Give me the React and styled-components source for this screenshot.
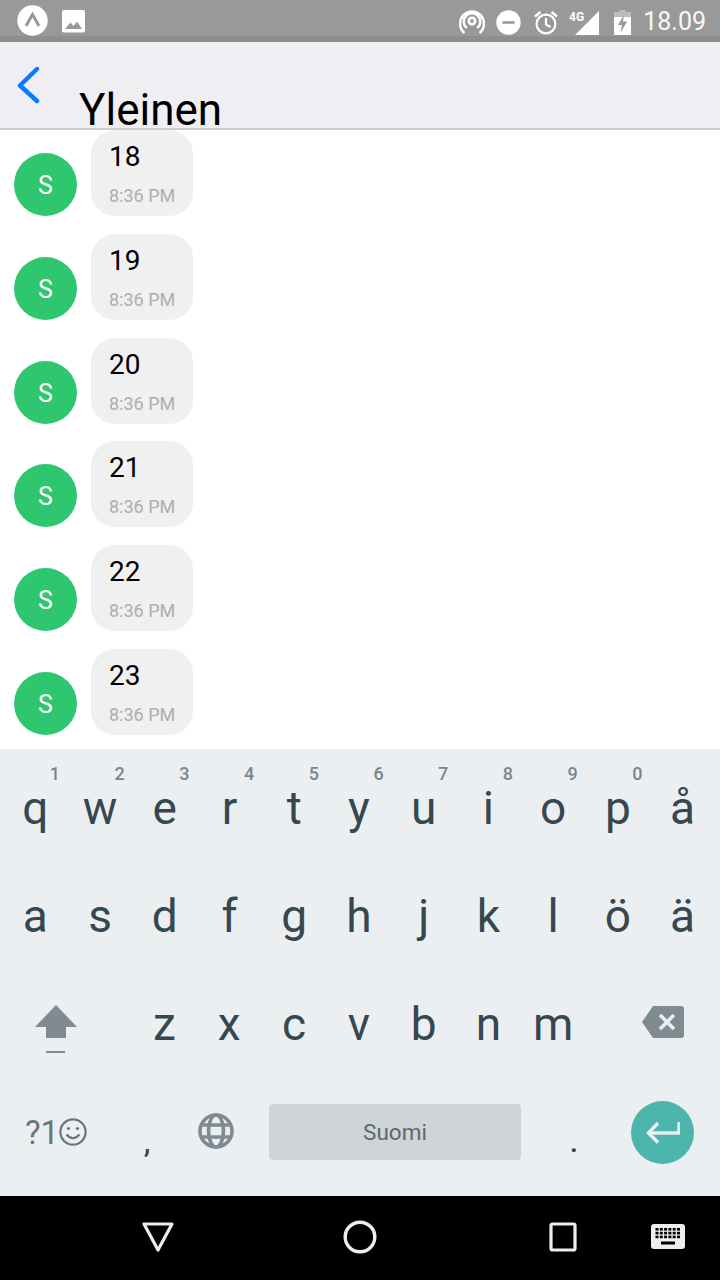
import React from "react";
import styled, { createGlobalStyle } from "styled-components";

const Global = createGlobalStyle`
  html, body { margin: 0; padding: 0; background: #fff; }
  body { font-family: Roboto, "Liberation Sans", sans-serif; }
`;
const Page = styled.div`
  width: 720px; height: 1280px; display: flex; flex-direction: column; overflow: hidden;
`;
const StatusBar = styled.div`
  height: 36px; flex: none; background: #999; border-bottom: 6px solid #8e8e8e;
  display: flex; align-items: flex-start; justify-content: space-between;
`;
const StatusLeft = styled.div`
  display: flex; align-items: center; gap: 14px; padding: 5px 0 0 17px;
`;
const StatusRight = styled.div`
  display: flex; align-items: center; gap: 11px; padding: 8px 14px 0 0;
`;
const StatusIcon = styled.span`
  display: flex; margin-left: ${p => p.$ml || 0}px;
`;
const Clock = styled.span`
  font-size: 25px; line-height: 28px; color: #f7f7f7; margin-left: 1px;
`;
const Header = styled.header`
  height: 88px; flex: none; box-sizing: border-box; background: #efeff3; border-bottom: 2px solid #cdcdd0;
  display: flex; align-items: flex-start;
`;
const BackButton = styled.div`
  width: 79px; padding: 24px 0 0 16px; box-sizing: border-box;
`;
const Title = styled.h1`
  margin: 51px 0 0; font-size: 44px; font-weight: 400; line-height: 34px; color: #000; white-space: nowrap;
`;
const List = styled.main`
  height: 619px; flex: none; overflow: hidden; background: #fff;
`;
const Row = styled.div`
  height: 103.8px; display: flex; align-items: flex-start; padding-left: 14px;
`;
const Avatar = styled.div`
  width: 63px; height: 63px; margin: 23px 14px 0 0; border-radius: 50%; background: #2ec76f; color: #fff;
  display: flex; align-items: center; justify-content: center; font-size: 25px; flex: none;
  box-sizing: border-box; padding-top: 2px;
`;
const Bubble = styled.div`
  width: 102px; height: 86px; box-sizing: border-box; background: #f0f0f0; border-radius: 24px;
  padding: 9px 0 0 18px;
`;
const MessageText = styled.div`
  font-size: 28px; line-height: 36px; color: #000;
`;
const MessageTime = styled.div`
  font-size: 18px; line-height: 24px; color: #aeaeae; margin-top: 9px;
`;
const Keyboard = styled.section`
  height: 447px; flex: none; background: #eceff1; box-sizing: border-box; padding-top: 5px;
`;
const KeyRow = styled.div`
  height: 108px; display: grid; align-items: center; box-sizing: border-box;
  padding: ${p => p.$pad || 0};
  grid-template-columns: ${p => p.$cols};
`;
const Key = styled.div`
  position: relative; height: 100%; display: flex; align-items: center; justify-content: center;
  font-size: 46px; color: #37474f; line-height: 1;
`;
const Hint = styled.span`
  position: absolute; top: 10px; left: 0; right: 0; padding-left: 39px; text-align: center;
  box-sizing: border-box; font-size: 18px; font-weight: 500; line-height: 20px; color: #7b868c;
`;
const Punct = styled.div`
  height: 100%; display: flex; justify-content: center; align-items: center; padding-top: 18px; box-sizing: border-box;
  font-size: 30px; font-weight: 500; color: #37474f;
`;
const Mode = styled.div`
  display: flex; align-items: center; justify-content: center; font-size: 33px; color: #68757c;
`;
const SpaceBar = styled.div`
  height: 56px; margin-left: 19px; border-radius: 4px; background: #cfd4d8; color: #5c686e; font-size: 22.5px;
  display: flex; align-items: center; justify-content: center;
`;
const EnterKey = styled.div`
  width: 63px; height: 63px; margin-left: -1px; border-radius: 50%; background: #4db6ac;
  display: flex; align-items: center; justify-content: center; justify-self: center;
`;
const IconCell = styled.div`
  display: flex; align-items: center; justify-content: center; padding-top: ${p => p.$top || 0}px;
  margin-top: ${p => p.$up ? -p.$up : 0}px;
`;
const NavBar = styled.nav`
  height: 84px; flex: none; background: #000; display: grid; align-items: center; padding-bottom: 2px; box-sizing: border-box;
  grid-template-columns: 316px 88px 92px 134px 76px 1fr;
`;

const row1 = [["q","1"],["w","2"],["e","3"],["r","4"],["t","5"],["y","6"],["u","7"],["i","8"],["o","9"],["p","0"],["å"]];
const row2 = ["a","s","d","f","g","h","j","k","l","ö","ä"];
const row3 = ["z","x","c","v","b","n","m"];
const messages = ["18","19","20","21","22","23"];

export default function App() {
  return (
    <Page>
      <Global />
      <StatusBar>
        <StatusLeft>
          <svg width="31" height="31" viewBox="0 0 31 31">
            <circle cx="15.5" cy="15.5" r="15.2" fill="#fff" />
            <path d="M9 21 L15.5 9.5 L22 21" fill="none" stroke="#999" strokeWidth="3" />
          </svg>
          <svg width="23" height="24" viewBox="0 0 23 24">
            <rect width="23" height="22.5" y="1" rx="2" fill="#fff" />
            <path d="M3 20 L8.5 13.5 L11.5 17 L15 12.5 L20 20Z" fill="#999" />
          </svg>
        </StatusLeft>
        <StatusRight>
          <StatusIcon>
            <svg width="26" height="26" viewBox="0 0 26 26" fill="none" stroke="#fff" strokeWidth="2.6">
              <circle cx="13" cy="12" r="3.2" />
              <path d="M7.8 19 A8.3 8.3 0 1 1 18.2 19" />
              <path d="M5.5 24 A12 12 0 1 1 20.5 24" />
            </svg>
          </StatusIcon>
          <StatusIcon>
            <svg width="25" height="25" viewBox="0 0 25 25">
              <circle cx="12.5" cy="12.5" r="12.2" fill="#fff" />
              <rect x="6.5" y="11.2" width="12" height="2.6" fill="#999" />
            </svg>
          </StatusIcon>
          <StatusIcon $ml={2}>
            <svg width="24" height="25" viewBox="0 0 24 25" fill="none" stroke="#fff" strokeWidth="2.2">
              <circle cx="12" cy="14" r="9.4" />
              <path d="M12 8 V14.5 L16.5 17" />
              <path d="M1 6.5 L6.5 2 M23 6.5 L17.5 2" strokeWidth="2.6" />
            </svg>
          </StatusIcon>
          <StatusIcon>
            <svg width="30" height="25" viewBox="0 0 30 25">
              <path d="M30 1 V25 H6 Z" fill="#fff" />
              <text x="0" y="11" fontFamily="Roboto, sans-serif" fontSize="12" fontWeight="700" fill="#fff">4G</text>
            </svg>
          </StatusIcon>
          <StatusIcon $ml={4}>
            <svg width="17" height="25" viewBox="0 0 17 25">
              <path d="M5.5 0 H11.5 V2 H17 V7 H0 V2 H5.5Z" fill="#bdbdbd" />
              <path d="M0 7 H17 V25 H0Z" fill="#fff" />
              <path d="M10 5 L4 15 H8 L6.5 23 L13 11.5 H9Z" fill="#999" />
            </svg>
          </StatusIcon>
          <Clock>18.09</Clock>
        </StatusRight>
      </StatusBar>
      <Header>
        <BackButton>
          <svg width="26" height="38" viewBox="0 0 26 38" fill="none" stroke="#0a7aff" strokeWidth="4.4" strokeLinecap="round" strokeLinejoin="round">
            <path d="M21 3 L4 19.5 L21 35" />
          </svg>
        </BackButton>
        <Title>Yleinen</Title>
      </Header>
      <List>
        {messages.map(m => (
          <Row key={m}>
            <Avatar>S</Avatar>
            <Bubble>
              <MessageText>{m}</MessageText>
              <MessageTime>8:36 PM</MessageTime>
            </Bubble>
          </Row>
        ))}
      </List>
      <Keyboard>
        <KeyRow $pad="0 5px 0 3px" $cols="repeat(11, 1fr)">
          {row1.map(([k, n]) => (
            <Key key={k}>{k}{n && <Hint>{n}</Hint>}</Key>
          ))}
        </KeyRow>
        <KeyRow $pad="0 5px 0 3px" $cols="repeat(11, 1fr)">
          {row2.map(k => <Key key={k}>{k}</Key>)}
        </KeyRow>
        <KeyRow $cols="112px 20px repeat(7, 64.8px) 20px 1fr">
          <IconCell $top={10}>
            <svg width="42" height="48" viewBox="0 0 42 48" fill="#7f8b91">
              <path d="M21 0 L42 22 H31 V33 H11 V22 H0 Z" />
              <rect x="11" y="46" width="19" height="2" />
            </svg>
          </IconCell>
          <span />
          {row3.map(k => <Key key={k}>{k}</Key>)}
          <span />
          <IconCell $up={4}>
            <svg width="42" height="32" viewBox="0 0 42 32">
              <path d="M11 0 H39 Q42 0 42 3 V29 Q42 32 39 32 H11 L0 16 Z" fill="#7f8b91" />
              <path d="M18 9 L32 23 M32 9 L18 23" stroke="#eceff1" strokeWidth="3.6" />
            </svg>
          </IconCell>
        </KeyRow>
        <KeyRow $cols="112px 70px 68px 271px 106px 72px 21px">
          <Mode>
            ?1
            <svg width="28" height="28" viewBox="0 0 28 28" fill="none" stroke="#68757c" strokeWidth="2.2">
              <circle cx="14" cy="14" r="12.6" />
              <circle cx="9.5" cy="10.5" r="1.6" fill="#68757c" stroke="none" />
              <circle cx="18.5" cy="10.5" r="1.6" fill="#68757c" stroke="none" />
              <path d="M7.5 16.5 Q14 24 20.5 16.5" />
            </svg>
          </Mode>
          <Punct>,</Punct>
          <IconCell $up={2}>
            <svg width="36" height="36" viewBox="0 0 36 36" fill="none" stroke="#7f8b91" strokeWidth="3.6">
              <circle cx="18" cy="18" r="16" />
              <ellipse cx="18" cy="18" rx="7.5" ry="16" />
              <path d="M3.5 12 H32.5 M3.5 24 H32.5" />
            </svg>
          </IconCell>
          <SpaceBar>Suomi</SpaceBar>
          <Punct>.</Punct>
          <EnterKey>
            <svg width="34" height="24" viewBox="0 0 34 24" fill="none" stroke="#eceff1" strokeWidth="3.4">
              <path d="M33 2 V13 H3" />
              <path d="M12 3 L2.5 13 L12 22.5" />
            </svg>
          </EnterKey>
          <span />
        </KeyRow>
      </Keyboard>
      <NavBar>
        <IconCell>
          <svg width="32" height="30" viewBox="0 0 32 30" fill="none" stroke="#eee" strokeWidth="3.2" strokeLinejoin="round">
            <path d="M2 2 H30 L16 28 Z" />
          </svg>
        </IconCell>
        <IconCell>
          <svg width="34" height="34" viewBox="0 0 34 34" fill="none" stroke="#eee" strokeWidth="3.4">
            <circle cx="17" cy="17" r="14.8" />
          </svg>
        </IconCell>
        <span />
        <IconCell>
          <svg width="28" height="30" viewBox="0 0 28 30" fill="none" stroke="#eee" strokeWidth="3.2" strokeLinejoin="round">
            <rect x="2" y="2" width="24" height="26" rx="1.5" />
          </svg>
        </IconCell>
        <IconCell>
          <svg width="34" height="26" viewBox="0 0 34 26">
            <rect width="34" height="25" rx="3" fill="#eee" />
            {[0,1,2].map(r => [0,1,2,3,4,5].map(c => (
              <rect key={`${r}-${c}`} x={4.5 + c * 4.3} y={4 + r * 3.8} width="3" height="2.6" fill="#000" />
            )))}
            <rect x="10" y="17.5" width="14" height="3" fill="#000" />
          </svg>
        </IconCell>
        <span />
      </NavBar>
    </Page>
  );
}
